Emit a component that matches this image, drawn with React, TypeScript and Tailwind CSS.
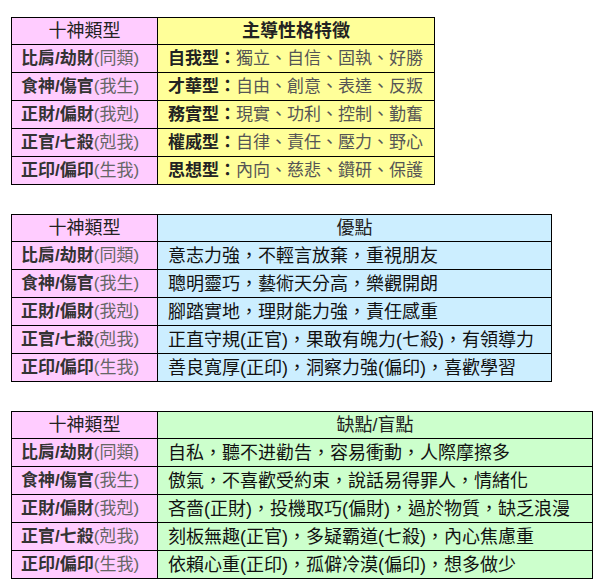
const ROWS: { main: string; rel: string }[] = [
  { main: "比肩/劫財", rel: "(同類)" },
  { main: "食神/傷官", rel: "(我生)" },
  { main: "正財/偏財", rel: "(我剋)" },
  { main: "正官/七殺", rel: "(剋我)" },
  { main: "正印/偏印", rel: "(生我)" },
];

const TRAITS: { type: string; words: string }[] = [
  { type: "自我型", words: "獨立、自信、固執、好勝" },
  { type: "才華型", words: "自由、創意、表達、反叛" },
  { type: "務實型", words: "現實、功利、控制、勤奮" },
  { type: "權威型", words: "自律、責任、壓力、野心" },
  { type: "思想型", words: "內向、慈悲、鑽研、保護" },
];

const MERITS = [
  "意志力強，不輕言放棄，重視朋友",
  "聰明靈巧，藝術天分高，樂觀開朗",
  "腳踏實地，理財能力強，責任感重",
  "正直守規(正官)，果敢有魄力(七殺)，有領導力",
  "善良寬厚(正印)，洞察力強(偏印)，喜歡學習",
];

const FLAWS = [
  "自私，聽不进勸告，容易衝動，人際摩擦多",
  "傲氣，不喜歡受約束，說話易得罪人，情緒化",
  "吝嗇(正財)，投機取巧(偏財)，過於物質，缺乏浪漫",
  "刻板無趣(正官)，多疑霸道(七殺)，內心焦慮重",
  "依賴心重(正印)，孤僻冷漠(偏印)，想多做少",
];

function NameCell({ main, rel }: { main: string; rel: string }) {
  return (
    <td className="h-[28px] border border-black bg-[#ffccff] pl-[9px] leading-none whitespace-nowrap">
      <span className="font-bold text-[#333]">{main}</span>
      <span className="text-[#666]">{rel}</span>
    </td>
  );
}

function Table({
  width,
  bg,
  title,
  titleBold,
  cells,
}: {
  width: string;
  bg: string;
  title: string;
  titleBold?: boolean;
  cells: React.ReactNode[];
}) {
  return (
    <table className={`${width} table-fixed border-collapse`}>
      <colgroup>
        <col className="w-[146px]" />
        <col />
      </colgroup>
      <tbody>
        <tr>
          <td className="h-[27px] border border-black bg-[#ffccff] text-center text-[18px] leading-none text-[#222]">
            十神類型
          </td>
          <td
            className={`h-[27px] border border-black ${bg} text-center text-[18px] leading-none text-[#222] ${
              titleBold ? "font-bold" : ""
            }`}
          >
            {title}
          </td>
        </tr>
        {ROWS.map((row, i) => (
          <tr key={row.main}>
            <NameCell main={row.main} rel={row.rel} />
            <td className={`h-[28px] border border-black ${bg} pl-[10px] leading-none whitespace-nowrap`}>
              {cells[i]}
            </td>
          </tr>
        ))}
      </tbody>
    </table>
  );
}

export default function App() {
  const font = { fontFamily: '"Liberation Sans", "Noto Sans CJK TC", sans-serif' };

  return (
    <div className="flex min-h-[587px] flex-col gap-[29px] bg-white pt-[17px] pl-[11px] text-[17px]" style={font}>
      <Table
        width="w-[424px]"
        bg="bg-[#ffff99]"
        title="主導性格特徵"
        titleBold
        cells={TRAITS.map((t) => (
          <span key={t.type}>
            <span className="font-bold text-[#222]">{t.type}：</span>
            <span className="text-[#555]">{t.words}</span>
          </span>
        ))}
      />
      <Table
        width="w-[541px]"
        bg="bg-[#cceeff]"
        title="優點"
        cells={MERITS.map((m) => (
          <span key={m} className="text-[18px] text-[#111]">
            {m}
          </span>
        ))}
      />
      <Table
        width="w-[582px]"
        bg="bg-[#ccffcc]"
        title="缺點/盲點"
        cells={FLAWS.map((f) => (
          <span key={f} className="text-[18px] text-[#111]">
            {f}
          </span>
        ))}
      />
    </div>
  );
}
